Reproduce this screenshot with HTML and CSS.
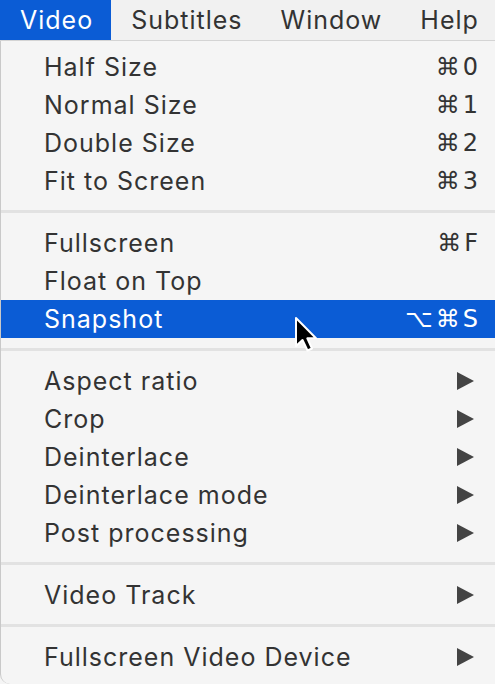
FILE: index.html
```html
<!DOCTYPE html>
<html>
<head>
<meta charset="utf-8">
<link rel="stylesheet" href="styles.css">
</head>
<body>
<div class="screen">
  <div class="menubar">
    <div class="mb-item active">Video</div>
    <div class="mb-item">Subtitles</div>
    <div class="mb-item">Window</div>
    <div class="mb-item">Help</div>
  </div>
  <div class="menu">
    <div class="row"><span class="label">Half Size</span><span class="key">⌘0</span></div>
    <div class="row"><span class="label">Normal Size</span><span class="key">⌘1</span></div>
    <div class="row"><span class="label">Double Size</span><span class="key">⌘2</span></div>
    <div class="row"><span class="label">Fit to Screen</span><span class="key">⌘3</span></div>
    <div class="sep"></div>
    <div class="row"><span class="label">Fullscreen</span><span class="key">⌘F</span></div>
    <div class="row"><span class="label">Float on Top</span></div>
    <div class="row selected"><span class="label">Snapshot</span><span class="key">⌥⌘S</span>
      <svg class="cursor" width="26" height="38" viewBox="0 0 26 38">
        <path d="M2 2 L2 30 L8.5 24 L13.5 34.5 L18 32.5 L13.3 22.3 L22 22.3 Z" fill="#000" stroke="#fff" stroke-width="2" stroke-linejoin="round"/>
      </svg>
    </div>
    <div class="sep"></div>
    <div class="row"><span class="label">Aspect ratio</span><span class="arrow"></span></div>
    <div class="row"><span class="label">Crop</span><span class="arrow"></span></div>
    <div class="row"><span class="label">Deinterlace</span><span class="arrow"></span></div>
    <div class="row"><span class="label">Deinterlace mode</span><span class="arrow"></span></div>
    <div class="row"><span class="label">Post processing</span><span class="arrow"></span></div>
    <div class="sep"></div>
    <div class="row"><span class="label">Video Track</span><span class="arrow"></span></div>
    <div class="sep"></div>
    <div class="row"><span class="label">Fullscreen Video Device</span><span class="arrow"></span></div>
  </div>
</div>
</body>
</html>
```

FILE: styles.css
```css
html, body {
  margin: 0;
  padding: 0;
  background: #3a3a3a;
}
.screen {
  width: 495px;
  height: 684px;
  overflow: hidden;
  font-family: Inter, "Liberation Sans", sans-serif;
  font-size: 25px;
  color: #333333;
  background: #f5f5f5;
}
.menubar {
  display: flex;
  height: 40px;
  background: #f1f1f1;
  border-bottom: 1px solid #d4d4d4;
}
.mb-item {
  display: flex;
  align-items: center;
  padding: 0 18px 0 20px;
  letter-spacing: 1px;
}
.mb-item.active {
  background: #0b5cd5;
  color: #ffffff;
}
.menu {
  padding: 7px 0 8px;
  background: #f5f5f5;
  border-left: 1px solid #c9c9c9;
  border-bottom-left-radius: 10px;
}
.row {
  position: relative;
  display: flex;
  align-items: center;
  justify-content: space-between;
  height: 38px;
  padding: 0 17px 0 43px;
  letter-spacing: 1px;
}
.row.selected {
  background: #0b5cd5;
  color: #ffffff;
}
.key {
  font-family: "DejaVu Sans", Inter, sans-serif;
  font-size: 24px;
  letter-spacing: 3px;
  margin-right: -3px;
}
.arrow {
  width: 0;
  height: 0;
  border-top: 9px solid transparent;
  border-bottom: 9px solid transparent;
  border-left: 17px solid #444444;
  margin-right: 4px;
}
.sep {
  height: 3px;
  margin: 10px 0 11px;
  background: #e2e2e2;
}
.cursor {
  position: absolute;
  left: 293px;
  top: 16px;
}
```
